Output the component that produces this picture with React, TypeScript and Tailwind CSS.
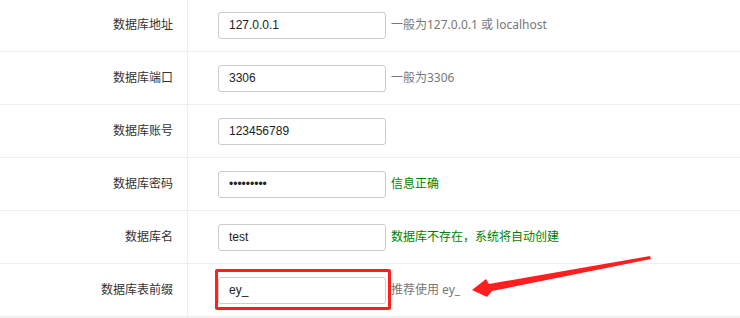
import React from "react";

const rows: { label: string; value: string; type?: string; hint?: string; hintClass?: string }[] = [
  { label: "数据库地址", value: "127.0.0.1", hint: "一般为127.0.0.1 或 localhost", hintClass: "text-[#777]" },
  { label: "数据库端口", value: "3306", hint: "一般为3306", hintClass: "text-[#777]" },
  { label: "数据库账号", value: "123456789" },
  { label: "数据库密码", value: "123456789", type: "password", hint: "信息正确", hintClass: "text-[#008000]" },
  { label: "数据库名", value: "test", hint: "数据库不存在，系统将自动创建", hintClass: "text-[#008000]" },
  { label: "数据库表前缀", value: "ey_", hint: "推荐使用 ey_", hintClass: "text-[#777]" },
];

export default function App() {
  return (
    <div
      className="relative w-[740px] h-[318px] overflow-hidden bg-[#f5f5f5]"
      style={{ fontFamily: '"Liberation Sans", "Noto Sans CJK SC", sans-serif' }}
    >
      <div className="mt-[-1px] bg-white">
        {rows.map((r) => (
          <div key={r.label} className="flex h-[53px] border-b border-[#eeeeee]">
            <div className="w-[188px] shrink-0 border-r border-[#eeeeee] flex items-center justify-end pr-[14px] text-[12px] text-[#333]">
              {r.label}
            </div>
            <div className="flex items-center pl-[30px]">
              <input
                readOnly
                type={r.type ?? "text"}
                value={r.value}
                className="w-[168px] h-[27px] border border-[#cccccc] rounded-[3px] px-[10px] text-[12px] text-[#222] outline-none bg-white"
                style={{ fontFamily: '"Liberation Sans", sans-serif' }}
              />
              {r.hint && (
                <span
                  className={`ml-[5px] text-[12px] ${r.hintClass}`}
                  style={{ fontFamily: '"Noto Sans", "Noto Sans CJK SC", sans-serif' }}
                >
                  {r.hint}
                </span>
              )}
            </div>
          </div>
        ))}
      </div>
      <div className="absolute left-[215px] top-[269px] w-[176px] h-[41px] border-[3px] border-[#ff1f1f] rounded-[2px]" />
      <svg className="absolute left-0 top-0" width="740" height="318">
        <polygon
          points="472,290 486,279 489,284 650,256 651,259 492,291 487,297"
          fill="#ff1f1f"
        />
      </svg>
    </div>
  );
}
